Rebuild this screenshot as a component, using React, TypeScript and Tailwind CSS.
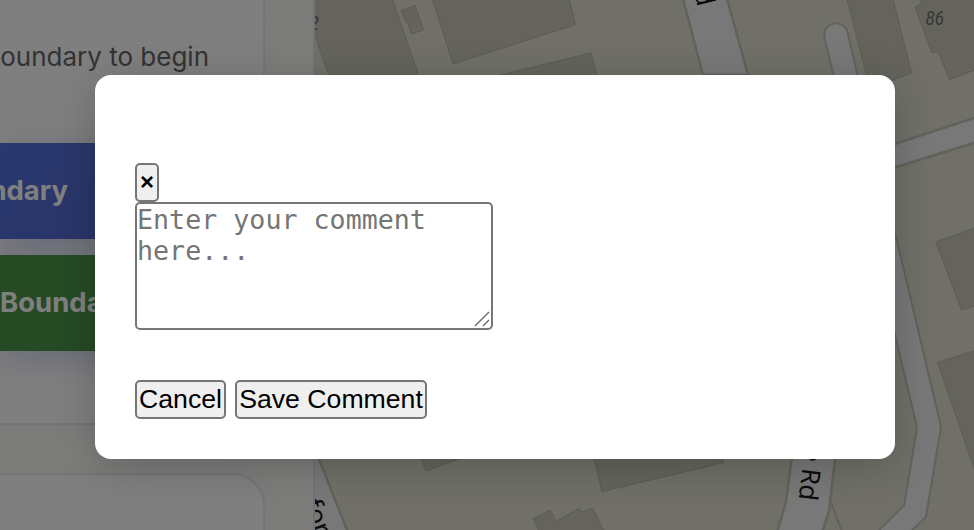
import React from "react";

const land = "#e0e0d2";
const building = "#c9c9ba";
const buildingEdge = "#b6b6a8";
const road = "#f1f1f1";
const casing = "#c4c4b6";

const buildings = [
  "300,-5 391,-5 421,82 331,82 315,35 300,0",
  "401,11 415,5 423.5,30 411,34 408,23 406,22",
  "431,-5 453,64 575.5,24.6 568,-5",
  "480,80 591,53 598,80",
  "846,-5 868,81 893,80 911.5,73 892,-5",
  "980,68 949.5,79.5 938,51 932,53 915,7 922,4 919,-5 980,-5",
  "980,226 936,242 961.5,310 980,304",
  "980,349 937.5,362.5 980,485",
  "419,452 426,471 470,455",
  "592,450 602,491.6 724,462.5 721,450",
  "533,519 550,510 556,521 579.5,508.5 582,512 592.6,508 606,535 541,535",
];

const roads = [
  "682,-5 703,75 748,75 726,-5",
  "790,440 791.7,459 786,502 776,536 821,536 829,511 835,459 837,440",
  "880,149 980,116 980,141 880,172",
  "300,410 319,459 349,535 300,535",
];

function StreetMap() {
  return (
    <svg className="h-full flex-1" viewBox="315 0 659 530" preserveAspectRatio="none">
      <rect x="315" y="0" width="659" height="530" fill={land} />
      {buildings.map((points) => (
        <polygon key={points} points={points} fill={building} stroke={buildingEdge} strokeWidth="1" />
      ))}
      <path d="M830 500L843 534" stroke={casing} strokeWidth="2" fill="none" />
      {roads.map((points) => (
        <polygon key={points} points={points} fill={road} stroke={casing} strokeWidth="2.5" />
      ))}
      <path d="M836 35L929 427L915 511L887 539" stroke={casing} strokeWidth="25.5" strokeLinecap="round" fill="none" />
      <path d="M836 35L929 427L915 511L887 539" stroke={road} strokeWidth="21.5" strokeLinecap="round" fill="none" />
      <g fontFamily="'Noto Sans', sans-serif" fontSize="26" fill="#161616">
        <text textAnchor="end" transform="translate(697.5 7.5) rotate(76)">Rd</text>
        <text textAnchor="end" transform="translate(798.5 499.5) rotate(97)">Grove Rd</text>
        <text transform="translate(303 503) rotate(70)">ford</text>
      </g>
      <g fontFamily="Roboto, sans-serif" fontStyle="italic" fontSize="20.5" fill="#6e6e66">
        <text x="925.5" y="24.5" textLength="18.5" lengthAdjust="spacingAndGlyphs">86</text>
        <text x="308" y="29.5">2</text>
      </g>
    </svg>
  );
}

function Sidebar() {
  return (
    <aside className="flex h-full w-[315px] shrink-0 flex-col border-r-2 border-[#e4e4e8] bg-[#fafaf8] font-[Inter,sans-serif]">
      <section className="flex h-[425px] w-[265px] shrink-0 flex-col border-r-2 border-b-2 border-[#e8e8e8] bg-white shadow-[0_4px_24px_rgba(0,0,0,0.03)]">
        <div className="flex h-[143px] justify-end pt-[39px] pr-[54px]">
          <p className="text-[26px] leading-9 whitespace-nowrap text-[#666]">Draw a boundary to begin</p>
        </div>
        <div className="flex flex-col gap-4">
          <div className="flex h-24 items-center justify-end bg-[linear-gradient(135deg,#5570dd,#5468c8)] pr-[195px] shadow-[0_8px_32px_rgba(90,105,200,0.28)]">
            <span className="text-[27.5px] font-bold whitespace-nowrap text-white">Draw Boundary</span>
          </div>
          <div className="flex h-24 items-center bg-[#4a9549] shadow-[0_8px_32px_rgba(90,105,200,0.28)]">
            <span className="text-[27.5px] font-bold whitespace-nowrap text-white">Boundary</span>
          </div>
        </div>
      </section>
      <section className="mt-12 h-20 w-[265px] shrink-0 rounded-tr-[32px] border-t-2 border-r-2 border-[#e8e8e8] bg-white shadow-[0_4px_24px_rgba(0,0,0,0.03)]" />
    </aside>
  );
}

const button =
  "flex h-[39px] items-center justify-center rounded-[5px] border-2 border-[#767676] bg-[#efefef] leading-[31px] whitespace-nowrap text-black";

function CommentDialog() {
  return (
    <div
      role="dialog"
      className="mt-[75px] ml-[95px] flex h-[384px] w-[800px] flex-col items-start rounded-2xl bg-white px-10 pt-[88px] font-['Liberation_Sans',Arial,sans-serif] shadow-[0_8px_40px_rgba(0,0,0,0.2)]"
    >
      <button className={`${button} w-6 pb-0.5 text-[24px] font-bold`}>×</button>
      <div className="relative h-32 w-[358px]">
        <textarea
          className="block h-full w-full resize-none overflow-hidden rounded-[5px] border-2 border-[#767676] bg-white font-['DejaVu_Sans_Mono',monospace] text-[26.67px] leading-[31px] placeholder:text-[#757575]"
          placeholder="Enter your comment here..."
        />
        <svg className="absolute right-[3px] bottom-[3px] h-4 w-4" viewBox="0 0 16 16" fill="none" stroke="#666" strokeWidth="1.4">
          <path d="M1 15L15 1M9 15L15 9" />
        </svg>
      </div>
      <div className="mt-[50px] flex gap-[9px]">
        <button className={`${button} w-[91px] text-[26.67px]`}>Cancel</button>
        <button className={`${button} w-48 text-[26.67px]`}>Save Comment</button>
      </div>
    </div>
  );
}

export default function App() {
  return (
    <div className="relative h-[530px] w-[974px] overflow-hidden">
      <main className="flex h-full">
        <Sidebar />
        <StreetMap />
      </main>
      <div className="absolute inset-0 flex items-start bg-black/50">
        <CommentDialog />
      </div>
    </div>
  );
}
